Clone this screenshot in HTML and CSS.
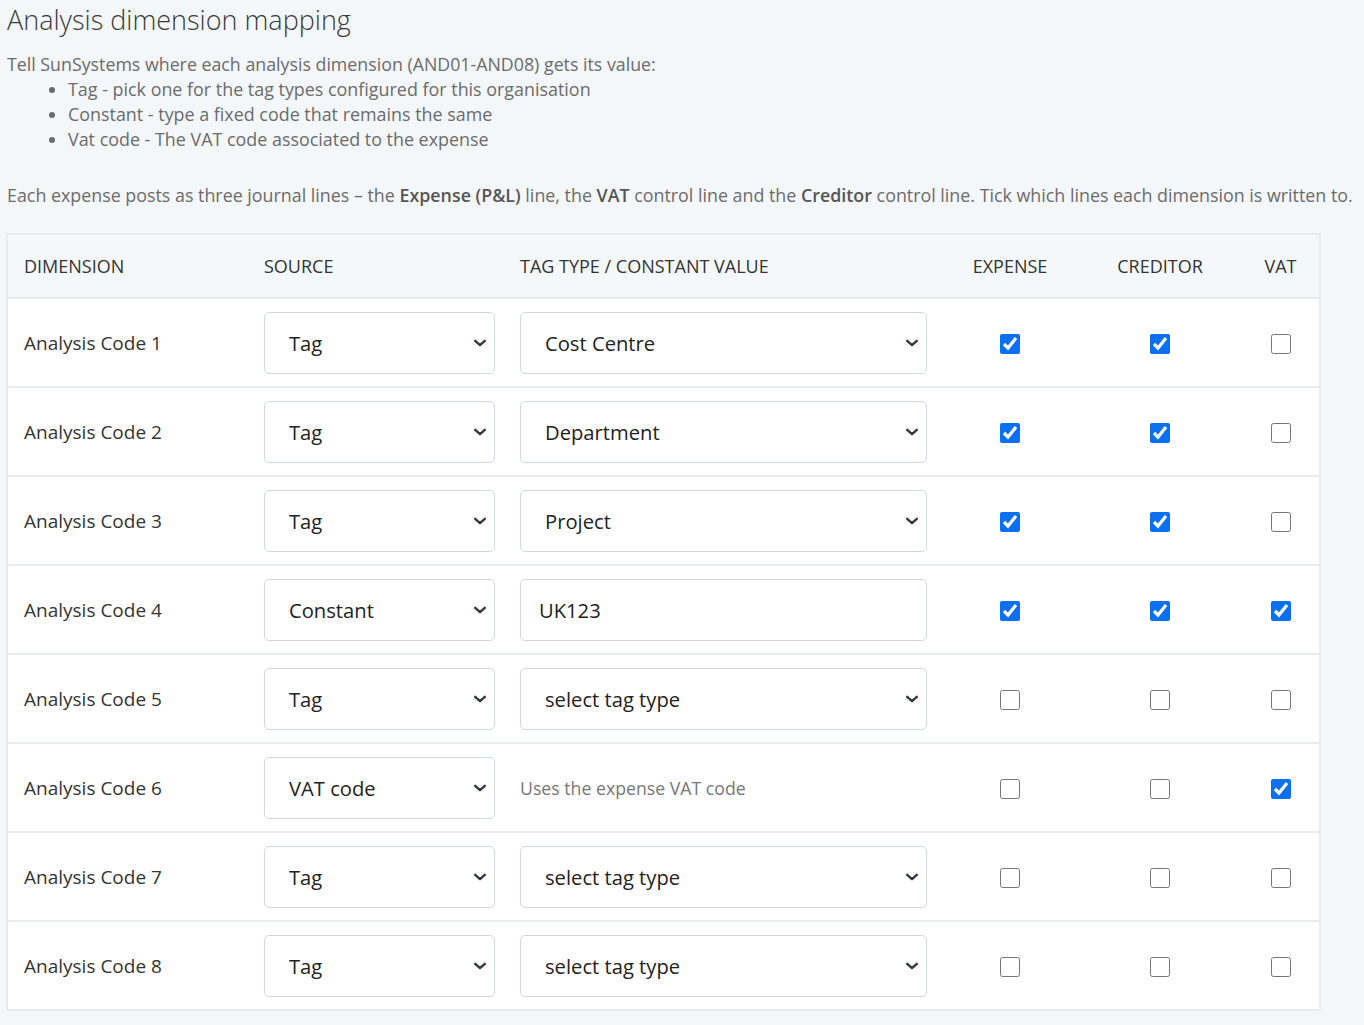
FILE: index.html
```html
<!DOCTYPE html>
<html lang="en">

<head>
  <meta charset="UTF-8" />
  <title>Analysis dimension mapping</title>
  <link rel="stylesheet" href="styles.css">
</head>

<body>
  <div class="page">
    <h2 class="title">Analysis dimension mapping</h2>
    <p class="intro">Tell SunSystems where each analysis dimension (AND01-AND08) gets its value:</p>
    <ul class="sources">
      <li>Tag - pick one for the tag types configured for this organisation</li>
      <li>Constant - type a fixed code that remains the same</li>
      <li>Vat code - The VAT code associated to the expense</li>
    </ul>
    <p class="note">Each expense posts as three journal lines – the <b>Expense (P&amp;L)</b> line, the <b>VAT</b> control line and the <b>Creditor</b> control line. Tick which lines each dimension is written to.</p>

    <!-- mapping table -->
    <table class="mapping">
      <colgroup>
        <col class="w-dim">
        <col class="w-src">
        <col class="w-val">
        <col class="w-exp">
        <col class="w-cred">
        <col class="w-vat">
      </colgroup>
      <thead>
        <tr>
          <th>Dimension</th>
          <th>Source</th>
          <th>Tag type / constant value</th>
          <th class="c">Expense</th>
          <th class="c">Creditor</th>
          <th class="c">Vat</th>
        </tr>
      </thead>
      <tbody>
        <tr>
          <td>Analysis Code 1</td>
          <td><select class="src"><option>Tag</option></select></td>
          <td><select class="val"><option>Cost Centre</option></select></td>
          <td class="c"><input type="checkbox" checked></td>
          <td class="c"><input type="checkbox" checked></td>
          <td class="c"><input type="checkbox"></td>
        </tr>
        <tr>
          <td>Analysis Code 2</td>
          <td><select class="src"><option>Tag</option></select></td>
          <td><select class="val"><option>Department</option></select></td>
          <td class="c"><input type="checkbox" checked></td>
          <td class="c"><input type="checkbox" checked></td>
          <td class="c"><input type="checkbox"></td>
        </tr>
        <tr>
          <td>Analysis Code 3</td>
          <td><select class="src"><option>Tag</option></select></td>
          <td><select class="val"><option>Project</option></select></td>
          <td class="c"><input type="checkbox" checked></td>
          <td class="c"><input type="checkbox" checked></td>
          <td class="c"><input type="checkbox"></td>
        </tr>
        <tr>
          <td>Analysis Code 4</td>
          <td><select class="src"><option>Constant</option></select></td>
          <td><input class="const" type="text" value="UK123"></td>
          <td class="c"><input type="checkbox" checked></td>
          <td class="c"><input type="checkbox" checked></td>
          <td class="c"><input type="checkbox" checked></td>
        </tr>
        <tr>
          <td>Analysis Code 5</td>
          <td><select class="src"><option>Tag</option></select></td>
          <td><select class="val"><option>select tag type</option></select></td>
          <td class="c"><input type="checkbox"></td>
          <td class="c"><input type="checkbox"></td>
          <td class="c"><input type="checkbox"></td>
        </tr>
        <tr>
          <td>Analysis Code 6</td>
          <td><select class="src"><option>VAT code</option></select></td>
          <td><span class="hint">Uses the expense VAT code</span></td>
          <td class="c"><input type="checkbox"></td>
          <td class="c"><input type="checkbox"></td>
          <td class="c"><input type="checkbox" checked></td>
        </tr>
        <tr>
          <td>Analysis Code 7</td>
          <td><select class="src"><option>Tag</option></select></td>
          <td><select class="val"><option>select tag type</option></select></td>
          <td class="c"><input type="checkbox"></td>
          <td class="c"><input type="checkbox"></td>
          <td class="c"><input type="checkbox"></td>
        </tr>
        <tr>
          <td>Analysis Code 8</td>
          <td><select class="src"><option>Tag</option></select></td>
          <td><select class="val"><option>select tag type</option></select></td>
          <td class="c"><input type="checkbox"></td>
          <td class="c"><input type="checkbox"></td>
          <td class="c"><input type="checkbox"></td>
        </tr>
      </tbody>
    </table>
  </div>
</body>

</html>
```

FILE: styles.css
```css
* {
  margin: 0;
  padding: 0;
  box-sizing: border-box;
}

body {
  background: #f4f7fa;
  font-family: "Open Sans", "Noto Sans", sans-serif;
  color: #333;
}

.page {
  padding: 0 6px;
}

.title {
  font-size: 27px;
  font-weight: 300;
  line-height: 40px;
  color: #3a3a3a;
  padding-left: 1px;
}

.intro {
  margin-top: 12px;
  font-size: 17.8px;
  line-height: 25px;
  color: #6b6b6b;
  padding-left: 1px;
}

.sources {
  padding-left: 62px;
  font-size: 17.9px;
  line-height: 25px;
  color: #6b6b6b;
}

.note {
  margin-top: 31px;
  font-size: 17.85px;
  line-height: 25px;
  color: #6b6b6b;
  padding-left: 1px;
  white-space: nowrap;
}

.note b {
  color: #555;
  font-weight: 600;
}

.mapping {
  margin-top: 25px;
  table-layout: fixed;
  width: 1315px;
  border-collapse: collapse;
  border: 2px solid #e8ecf0;
  background: #fff;
}

.w-dim { width: 241px; }
.w-src { width: 256px; }
.w-val { width: 438px; }
.w-exp { width: 136px; }
.w-cred { width: 164px; }
.w-vat { width: 78px; }

.mapping th {
  height: 64px;
  padding: 0 16px;
  text-align: left;
  font-weight: 400;
  font-size: 18px;
  text-transform: uppercase;
  color: #333;
  background: #f5f8fb;
  border-bottom: 2px solid #e8ecf0;
}

.mapping td {
  height: 89px;
  padding: 0 16px;
  font-size: 19px;
  color: #333;
  border-bottom: 2px solid #e8ecf0;
  vertical-align: middle;
}

.mapping .c {
  text-align: center;
  padding: 0;
}

.mapping select,
.mapping .const {
  height: 62px;
  border: 1px solid #cfd7e2;
  border-radius: 5px;
  background-color: #fff;
  font-family: inherit;
  font-size: 20.2px;
  color: #222;
  outline: none;
}

.mapping select {
  appearance: none;
  -webkit-appearance: none;
  padding: 0 40px 0 24px;
  background-image: url("data:image/svg+xml,%3csvg xmlns='http://www.w3.org/2000/svg' viewBox='0 0 16 16'%3e%3cpath fill='none' stroke='%23343a40' stroke-linecap='round' stroke-linejoin='round' stroke-width='2.8' d='M2.5 5.5l5.5 5 5.5-5'/%3e%3c/svg%3e");
  background-repeat: no-repeat;
  background-position: right 6px center;
  background-size: 16px 14px;
}

.mapping .src {
  width: 231px;
}

.mapping .val,
.mapping .const {
  width: 407px;
}

.mapping .const {
  padding: 0 18px;
}

.mapping .hint {
  font-size: 17.7px;
  color: #777;
}

.mapping input[type="checkbox"] {
  width: 20px;
  height: 20px;
  accent-color: #0b70f0;
  vertical-align: middle;
}
```
